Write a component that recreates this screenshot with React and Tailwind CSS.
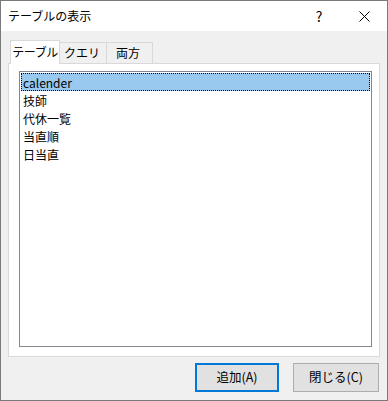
export default function App() {
  const items = ["calender", "技師", "代休一覧", "当直順", "日当直"];
  const font = { fontFamily: '"Noto Sans CJK JP", "Noto Sans", sans-serif' };
  return (
    <div className="w-[388px] h-[401px] border border-[#7a7a7a] bg-[#f0f0f0] flex flex-col text-[12px] text-black" style={font}>
      <div className="h-[30px] bg-white flex items-center pl-[7px] shrink-0">
        <span className="flex-1 leading-none">テーブルの表示</span>
        <span className="w-[44px] text-center text-[14px] leading-none">?</span>
        <span className="w-[46px] flex justify-center">
          <svg width="11" height="11" viewBox="0 0 11 11"><path d="M0.5 0.5 L10.5 10.5 M10.5 0.5 L0.5 10.5" stroke="#000" strokeWidth="1" /></svg>
        </span>
      </div>
      <div className="flex-1 flex flex-col px-[7px] pt-[8px]">
        <div className="flex h-[24px] items-end relative z-10 pl-[2px]">
          <div className="h-[24px] w-[50px] bg-white border border-b-0 border-[#d9d9d9] flex items-center justify-center -mb-px pb-[2px] tracking-[-0.5px]">テーブル</div>
          <div className="h-[21px] w-[47px] pl-[4px] border border-l-0 border-b-0 border-[#d9d9d9] flex items-center">クエリ</div>
          <div className="h-[21px] w-[46px] pl-[9px] border border-l-0 border-b-0 border-[#d9d9d9] flex items-center">両方</div>
        </div>
        <div className="h-[294px] bg-white border border-[#d9d9d9] pl-[10px] pr-[7px] pt-[7px] pb-[9px] flex">
          <div className="flex-1 border border-[#828790] p-[1px] flex flex-col">
            {items.map((it, i) => (
              <div key={it} className={"h-[18px] flex items-center pl-[2px] pt-px " + (i === 0 ? "bg-[#99c9ef] outline outline-1 outline-dotted outline-[#000] -outline-offset-1" : "")}>{it}</div>
            ))}
          </div>
        </div>
        <div className="flex justify-end gap-[14px] pt-[6px] pr-[1px]">
          <div className="w-[84px] h-[29px] border-2 border-[#0078d7] bg-[#e1e1e1] flex items-center justify-center text-[12.5px]">追加(A)</div>
          <div className="w-[86px] h-[29px] border border-[#adadad] bg-[#e1e1e1] flex items-center justify-center text-[12.5px]">閉じる(C)</div>
        </div>
      </div>
    </div>
  );
}
